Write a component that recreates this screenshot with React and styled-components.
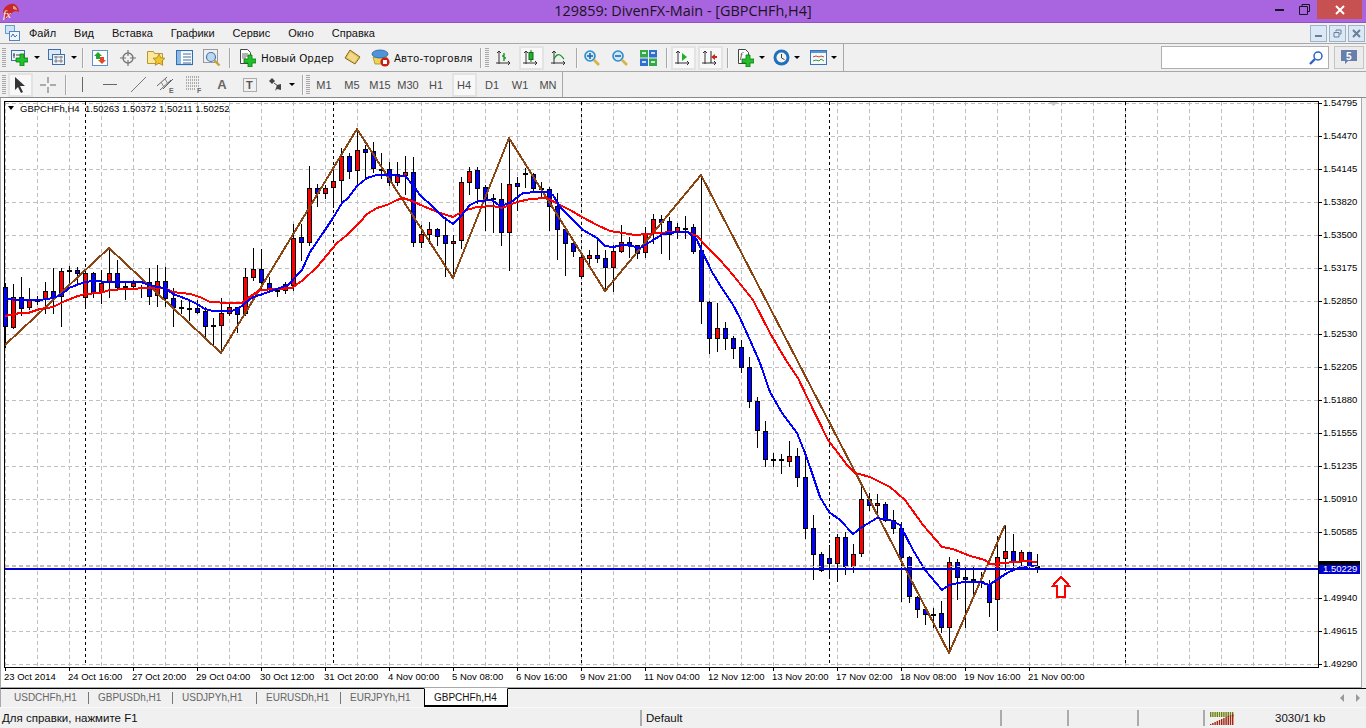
import React from "react"
import styled, { createGlobalStyle } from "styled-components"

const GlobalStyle = createGlobalStyle`
  html, body { margin: 0; padding: 0; background: #f0f0f0; overflow: hidden; }
  body { font-family: "Liberation Sans", Arial, sans-serif; }
  * { box-sizing: border-box; }
`

const Window = styled.div`
  width: 1366px;
  height: 728px;
  display: flex;
  flex-direction: column;
  background: #f0f0f0;
  color: #111;
  overflow: hidden;
`

const TitleBar = styled.div`
  position: relative;
  flex: 0 0 23px;
  height: 23px;
  background: #a865df;
  border-bottom: 1px solid #8f53c2;
  display: flex;
  align-items: center;
  padding-left: 2px;
`

const TitleText = styled.div`
  position: absolute;
  left: 0;
  right: 0;
  top: 1px;
  text-align: center;
  font: 14.4px "Open Sans", sans-serif;
  color: #1b1224;
  line-height: 20px;
`

const WinControls = styled.div`
  margin-left: auto;
  display: flex;
  align-items: flex-start;
  height: 22px;
  margin-right: 4px;
`

const WinBtn = styled.div`
  width: ${p => p.$w}px;
  height: 19px;
  display: flex;
  align-items: center;
  justify-content: center;
  background: ${p => p.$close ? "#c75050" : "transparent"};
`

const MenuBar = styled.div`
  flex: 0 0 21px;
  display: flex;
  align-items: center;
  padding-left: 5px;
  border-bottom: 1px solid #a8a8a8;
  height: 21px;
`

const MenuItem = styled.div`
  font-size: 11px;
  padding: 0 9px;
  line-height: 18px;
`

const MenuIcon = styled.div`
  width: 15px;
  height: 16px;
`

const MdiGroup = styled.div`
  margin-left: auto;
  display: flex;
  gap: 2px;
  padding-right: 1px;
`

const MdiBtn = styled.div`
  width: 17px;
  height: 17px;
  background: #dbe8f6;
  border: 1px solid #9db2c6;
  display: flex;
  align-items: center;
  justify-content: center;
`

const ToolRow = styled.div`
  flex: 0 0 ${p => p.$h}px;
  height: ${p => p.$h}px;
  display: flex;
  align-items: center;
  padding-left: 2px;
  border-bottom: 1px solid ${p => p.$dark ? "#8a8a8a" : "#a8a8a8"};
`

const RowEnd = styled.div`
  width: 1px;
  align-self: stretch;
  background: #a8a8a8;
  margin-left: ${p => p.$l || 0}px;
`

const Grip = styled.div`
  width: 4px;
  height: 20px;
  margin-left: ${p => p.$l || 0}px;
  background: repeating-linear-gradient(to bottom, #a8a8a8 0 1px, #f0f0f0 1px 2px);
`

const Sep = styled.div`
  width: 2px;
  height: 20px;
  background: linear-gradient(to right, #a8a8a8 50%, #f8f8f8 50%);
  margin-left: ${p => p.$l}px;
  margin-right: ${p => p.$r}px;
`

const ToolBtn = styled.div`
  width: ${p => p.$w}px;
  height: 24px;
  display: flex;
  align-items: center;
  justify-content: ${p => p.$left ? "flex-start" : "center"};
  padding-left: ${p => p.$pad || 0}px;
  gap: ${p => p.$gap || 0}px;
  flex: none;
  position: relative;
  font-size: 11px;
  color: ${p => p.$muted ? "#4a4a4a" : "#111"};
`

const ActiveFace = styled.div`
  width: 25px;
  height: 24px;
  border: 2px solid #e3e3e3;
  background: #f8f8f8;
  display: flex;
  align-items: center;
  justify-content: center;
  font-size: 11px;
  color: #4a4a4a;
`

const ToolLabel = styled.span`
  font: 10.3px "DejaVu Sans", sans-serif;
  white-space: nowrap;
`

const Caret = styled.i`
  display: block;
  flex: none;
  width: 0;
  height: 0;
  border-left: 3px solid transparent;
  border-right: 3px solid transparent;
  border-top: 3px solid #000;
`

const SearchBox = styled.div`
  margin-left: auto;
  width: 168px;
  height: 23px;
  background: #fff;
  border: 1px solid #b0b0b0;
  display: flex;
  align-items: center;
  justify-content: flex-end;
  padding-right: 5px;
`

const MailBtn = styled.div`
  width: 30px;
  height: 23px;
  margin: 0 2px 0 5px;
  background: #ececec;
  border: 1px solid #c4c4c4;
  display: flex;
  align-items: center;
  justify-content: center;
`

const ChartPane = styled.div`
  flex: 0 0 590px;
  height: 590px;
  display: flex;
  padding-right: 4px;
`

const ChartSurface = styled.div`
  flex: 1;
  background: #fff;
  border-left: 1px solid #a8a8a8;
  border-right: 1px solid #a8a8a8;
  border-bottom: 1px solid #a8a8a8;
  overflow: hidden;
`

const ChartSvg = styled.svg`
  display: block;
  font-family: "Liberation Sans", Arial, sans-serif;
  font-size: 9.5px;
  fill: #000;
`

const TabBar = styled.div`
  flex: 0 0 19px;
  height: 19px;
  display: flex;
  align-items: stretch;
  border-top: 1px solid #000;
  padding-left: 4px;
  border-left: 1px solid #a8a8a8;
`

const Tab = styled.div`
  width: 84px;
  margin-left: ${p => p.$active ? -1 : 0}px;
  font-size: 10px;
  line-height: 17px;
  padding-left: 9px;
  color: ${p => p.$active ? "#111" : "#666"};
  background: ${p => p.$active ? "#fff" : "transparent"};
  margin-top: ${p => p.$active ? -1 : 0}px;
  border-top: ${p => p.$active ? "1px solid #fff" : "none"};
  border-left: ${p => p.$active ? "1px solid #000" : "none"};
  border-right: ${p => p.$active ? "1px solid #000" : "none"};
  border-bottom: ${p => p.$active ? "2px solid #000" : "none"};
  position: relative;
  ${p => p.$sep ? `
    &::after {
      content: "";
      position: absolute;
      right: 0;
      top: 3px;
      bottom: 3px;
      width: 1px;
      background: #777;
    }
  ` : ""}
`

const TabArrows = styled.div`
  margin-left: auto;
  display: flex;
  align-items: center;
  gap: 12px;
  padding-right: 6px;
`

const TabArrow = styled.i`
  display: block;
  width: 0;
  height: 0;
  border-top: 4px solid transparent;
  border-bottom: 4px solid transparent;
  ${p => p.$right ? "border-left: 4px solid #999;" : "border-right: 4px solid #999;"}
`

const StatusBar = styled.div`
  flex: 1;
  display: flex;
  align-items: center;
  font-size: 11.5px;
  border-top: 1px solid #f8f8f8;
`

const StatusCell = styled.div`
  width: ${p => p.$w}px;
  flex: ${p => p.$w ? "none" : 1};
  height: 16px;
  line-height: 16px;
  padding-left: ${p => p.$pad || 0}px;
  border-right: ${p => p.$last ? "none" : "2px solid #ababab"};
  display: flex;
  align-items: center;
`

const Traffic = styled.div`
  margin-left: 5px;
  margin-right: 41px;
  flex: none;
  line-height: 0;
`

// icons, all hand drawn on a pixel grid
const Ico = ({ w = 16, h = 16, children }) => (
  <svg width={ w } height={ h } viewBox={ `0 0 ${ w } ${ h }` } style={{ display: "block", flex: "none" }}>
    { children }
  </svg>
)

const Plus = ({ x = 0, y = 0 }) => (
  <path d={ `M${ x + 4 } ${ y }h4v4h4v4h-4v4h-4v-4h-4v-4h4z` } fill="#22c02a" stroke="#0a7a10" strokeWidth="0.8" />
)

const Axes = () => <path d="M3 1v13M0 13h14M1 3l2-2 2 2M12 11l2 2-2 2" stroke="#333" fill="none" strokeWidth="1" />

const AppLogo = () => (
  <Ico w={ 18 } h={ 17 }>
    <path d="M1 9C2 3 8 0 12 1c3 1 5 4 5 8l-3-1-3 1-3 3-4 4-2-2z" fill="#c8282a" />
    <path d="M11 3c2 0 4 2 4 4l-4-1z" fill="#e8a090" />
    <text x="1" y="15" fontSize="11" fontStyle="italic" fontFamily="Liberation Serif" fill="#fff">fx</text>
  </Ico>
)

const MdiIcon = () => (
  <Ico w={ 15 } h={ 16 }>
    <rect x="0.5" y="0.5" width="9" height="8" fill="#cfe3f7" stroke="#6c9bd0" />
    <rect x="4.5" y="6.5" width="10" height="9" fill="#f0f6fc" stroke="#4d84c4" />
    <path d="M6 12l2-3 2 3 2-2" stroke="#3a70b0" fill="none" />
  </Ico>
)

const NewChart = () => (
  <Ico w={ 17 } h={ 17 }>
    <rect x="0.5" y="1.5" width="13" height="10" fill="#eef4fb" stroke="#3d6fae" />
    <path d="M3 4v5M5 6h5M2 6h2" stroke="#444" />
    <Plus x={ 5 } y={ 5 } />
  </Ico>
)

const Profiles = () => (
  <Ico w={ 17 } h={ 17 }>
    <rect x="0.5" y="0.5" width="12" height="10" fill="#dbe8f6" stroke="#3d6fae" />
    <rect x="4.5" y="5.5" width="12" height="10" fill="#eef4fb" stroke="#3d6fae" />
    <path d="M6 8h9M6 12h9M8 7v7M13 7v7" stroke="#555" strokeWidth="0.7" />
  </Ico>
)

const MarketWatch = () => (
  <Ico>
    <rect x="0.5" y="0.5" width="15" height="15" fill="#fff" stroke="#5a93cf" />
    <path d="M6 2l-4 4h2v3h4V6h2z" fill="#1fa82b" />
    <path d="M10 14l4-4h-2V7H8v3H6z" fill="#e04a2a" />
  </Ico>
)

const Navigator = () => (
  <Ico w={ 16 } h={ 16 }>
    <circle cx="8" cy="8" r="5" fill="none" stroke="#777" strokeWidth="1.4" />
    <path d="M8 0v6M8 10v6M0 8h6M10 8h6" stroke="#777" strokeWidth="1.2" />
  </Ico>
)

const FolderStar = () => (
  <Ico w={ 19 } h={ 17 }>
    <path d="M0.5 2.5h6l1 2h8v10h-15z" fill="#fbe89c" stroke="#b9962f" />
    <path d="M12 5l1.8 3.8 4.2.5-3 2.8.8 4.2-3.8-2.1-3.8 2.1.8-4.2-3-2.8 4.2-.5z" fill="#f2c32c" stroke="#a88415" strokeWidth="0.8" />
  </Ico>
)

const TerminalIcon = () => (
  <Ico w={ 17 } h={ 16 }>
    <rect x="0.5" y="0.5" width="16" height="14" fill="#fff" stroke="#2f6fb6" strokeWidth="1.2" />
    <rect x="1" y="1" width="4" height="13" fill="#8fb8e2" />
    <path d="M7 4h8M7 7h8M7 10h8M7 13h8" stroke="#3f6f9f" />
  </Ico>
)

const Tester = () => (
  <Ico w={ 18 } h={ 18 }>
    <rect x="0.5" y="0.5" width="14" height="13" fill="#eceff3" stroke="#9a9a9a" />
    <circle cx="8" cy="8" r="4.5" fill="#bcd8ef" stroke="#4d79a8" strokeWidth="1.2" />
    <path d="M11.5 11.5l5 5" stroke="#c8a030" strokeWidth="2.4" />
  </Ico>
)

const NewOrder = () => (
  <Ico w={ 17 } h={ 18 }>
    <path d="M1.5 0.5h7l3 3v11h-10z" fill="#fff" stroke="#444" />
    <path d="M3 5h6M3 7h6M3 9h4" stroke="#666" />
    <Plus x={ 5 } y={ 6 } />
  </Ico>
)

const Book = () => (
  <Ico w={ 17 } h={ 17 }>
    <path d="M6 1l10 7-5 7L1 9z" fill="#e3bd55" stroke="#8a6a18" />
    <path d="M6 3l8 5.5-3.5 5L3 8.5z" fill="#f1d98c" />
  </Ico>
)

const AutoTrade = () => (
  <Ico w={ 19 } h={ 18 }>
    <path d="M2 8h14l-1 7H4z" fill="#efd25a" stroke="#a98a1c" strokeWidth="0.8" />
    <ellipse cx="9" cy="5" rx="8" ry="4" fill="#4f94d8" stroke="#2a5f9e" strokeWidth="0.8" />
    <circle cx="14" cy="13" r="4.6" fill="#c81f12" />
    <rect x="12" y="11" width="4" height="4" fill="#fff" />
  </Ico>
)

const BarsIcon = () => (
  <Ico>
    <Axes />
    <path d="M8 3v8M8 8h2M6 6h2" stroke="#14961f" strokeWidth="1.4" fill="none" />
  </Ico>
)

const CandleIcon = () => (
  <Ico>
    <Axes />
    <path d="M8 0v12" stroke="#14691c" />
    <rect x="6" y="2.5" width="4" height="7" fill="#1fb52b" stroke="#14691c" />
  </Ico>
)

const LineIcon = () => (
  <Ico>
    <Axes />
    <path d="M3 9c2-4 4-5 6-4s3 3 4 4" stroke="#14961f" fill="none" strokeWidth="1.2" />
  </Ico>
)

const ZoomGlass = ({ plus }) => (
  <Ico>
    <circle cx="6" cy="6" r="5" fill="#cfe6f8" stroke="#2c8ac9" strokeWidth="1.6" />
    <path d="M3 6h6" stroke="#1d6ea8" strokeWidth="1.6" />
    { plus ? <path d="M6 3v6" stroke="#1d6ea8" strokeWidth="1.6" /> : null }
    <path d="M10 10l5 5" stroke="#d9b441" strokeWidth="2.6" />
  </Ico>
)

const Tile = () => (
  <Ico w={ 17 } h={ 16 }>
    <rect x="0" y="0" width="8" height="7.5" fill="#35a84a" />
    <rect x="9" y="0" width="8" height="7.5" fill="#2f6fd0" />
    <rect x="0" y="8.5" width="8" height="7.5" fill="#2f6fd0" />
    <rect x="9" y="8.5" width="8" height="7.5" fill="#35a84a" />
    <path d="M2 3h4M11 3h4M2 12h4M11 12h4" stroke="#fff" strokeWidth="1.6" />
  </Ico>
)

const ScrollIcon = () => (
  <Ico>
    <Axes />
    <path d="M7 3l5 4-5 4z" fill="#22b02c" />
  </Ico>
)

const ShiftIcon = () => (
  <Ico>
    <Axes />
    <path d="M9 1v12" stroke="#222" />
    <path d="M9 7l4-3v2h2v2h-2v2z" fill="#c8281a" />
  </Ico>
)

const Indicators = () => (
  <Ico w={ 17 } h={ 18 }>
    <path d="M1.5 0.5h7l3 3v11h-10z" fill="#fff" stroke="#444" />
    <text x="3" y="9" fontSize="9" fontStyle="italic" fontFamily="Liberation Serif" fill="#222">f</text>
    <Plus x={ 5 } y={ 6 } />
  </Ico>
)

const ClockIcon = () => (
  <Ico w={ 17 } h={ 17 }>
    <circle cx="8.5" cy="8.5" r="8" fill="#1f6fc0" />
    <circle cx="8.5" cy="8.5" r="5" fill="#f2f2ee" />
    <path d="M8.5 5v4l3 1.5" stroke="#444" fill="none" />
  </Ico>
)

const TemplateIcon = () => (
  <Ico w={ 17 } h={ 15 }>
    <rect x="0.5" y="0.5" width="16" height="14" fill="#f4f8fc" stroke="#3a74b8" />
    <rect x="1" y="1" width="15" height="2" fill="#5a93d5" />
    <path d="M3 7l3-1 3 1 2-1 3 1" stroke="#c84a2a" fill="none" />
    <path d="M3 11l3-1 3 1 2-2 3 2" stroke="#2ea03a" fill="none" />
  </Ico>
)

const CursorIcon = () => (
  <Ico w={ 12 } h={ 16 }>
    <path d="M1 0l10 9H6l3 6-2 1-3-6-3 3z" fill="#333" />
  </Ico>
)

const CrossIcon = () => (
  <Ico>
    <path d="M8 0v6M8 10v6M0 8h6M10 8h6" stroke="#666" />
  </Ico>
)

const VLineIcon = () => <Ico w={ 3 } h={ 15 }><path d="M1.5 0v15" stroke="#666" /></Ico>
const HLineIcon = () => <Ico w={ 14 } h={ 3 }><path d="M0 1.5h14" stroke="#666" /></Ico>
const TrendIcon = () => <Ico w={ 15 } h={ 15 }><path d="M0 15L15 0" stroke="#777" /></Ico>

const ChannelIcon = () => (
  <Ico w={ 18 } h={ 18 }>
    <path d="M0 10L10 1M3 14L14 4M6 13L16 3" stroke="#666" />
    <path d="M4 6l3 5M8 3l3 5" stroke="#888" />
    <text x="12" y="17" fontSize="7" fontWeight="bold" fill="#666" fontFamily="Liberation Sans">E</text>
  </Ico>
)

const FiboIcon = () => (
  <Ico w={ 16 } h={ 17 }>
    <path d="M0 1h14M0 4h14M0 7h14M0 10h14M0 13h10" stroke="#666" strokeDasharray="1 1" />
    <text x="11" y="17" fontSize="7" fontWeight="bold" fill="#666" fontFamily="Liberation Sans">F</text>
  </Ico>
)

const LetterA = styled.span`
  font: bold 13px "Liberation Sans", sans-serif;
  color: #666;
`

const TextBoxIcon = () => (
  <Ico w={ 14 } h={ 14 }>
    <rect x="0.5" y="0.5" width="13" height="13" fill="none" stroke="#666" strokeDasharray="1 1" />
    <text x="3" y="11" fontSize="11" fontWeight="bold" fill="#555" fontFamily="Liberation Sans">T</text>
  </Ico>
)

const ShapesIcon = () => (
  <Ico w={ 14 } h={ 14 }>
    <path d="M3 0l3 3-3 3-3-3z" fill="#444" />
    <path d="M8 7l4-1v6l-4-1-2 2z" fill="#444" />
    <path d="M5 5l4 3" stroke="#444" />
  </Ico>
)

const SearchGlass = () => (
  <Ico w={ 14 } h={ 14 }>
    <circle cx="9" cy="5" r="4" fill="#fff" stroke="#2f62c0" strokeWidth="1.5" />
    <path d="M6 8l-5 5" stroke="#2f62c0" strokeWidth="2.4" />
  </Ico>
)

const MailIcon = () => (
  <Ico w={ 16 } h={ 15 }>
    <path d="M0 0h16v11H7l-3 3v-3H0z" fill="#667fab" />
    <text x="5" y="9.5" fontSize="10" fontWeight="bold" fill="#fff" fontFamily="Liberation Sans">5</text>
  </Ico>
)

const MdiGlyph = ({ kind }) => (
  <Ico w={ 9 } h={ 9 }>
    { kind === "min" ? <rect x="1" y="6" width="7" height="2" fill="#6a7f96" /> : null }
    { kind === "restore" ? <path d="M3 2.5V1h5v4H6.5M1 3.5h5v4.5H1z" stroke="#6a7f96" fill="none" /> : null }
    { kind === "close" ? <path d="M1 1l7 7M8 1l-7 7" stroke="#6a7f96" strokeWidth="2" /> : null }
  </Ico>
)

const TrafficIcon = () => {
  const bars = [5, 5, 5, 4, 5, 4, 5, 5, 4, 5, 4]
  return (
    <Ico w={ 24 } h={ 13 }>
      { bars.map((b, i) => (
        <g key={ i }>
          <rect x={ i * 2.2 } y={ 0 } width="1.4" height="5" fill="#6d7f0a" />
          <rect x={ i * 2.2 } y={ 12 - i } width="1.4" height={ i + 1 } fill="#a32410" />
        </g>
      )) }
    </Ico>
  )
}

// chart data, read off the picture in pixels: [kind, high, bodyTop, bodyBottom, low], first candle at x=5, step 8
const candles = [
  ["b",283,287,326,347],["r",284,297,327,328],["b",277,297,308,315],["r",288,300,307,309],["d",296,300,300,304],
  ["r",282,291,299,313],["b",268,291,297,313],["r",268,271,296,326],["d",266,270,271,282],["b",267,270,273,283],
  ["r",270,273,297,307],["b",272,273,292,297],["r",270,283,292,303],["r",248,273,282,297],["b",260,273,287,290],
  ["d",282,286,286,299],["r",280,283,286,287],["d",285,287,287,297],["b",268,282,296,304],["r",265,281,295,306],
  ["b",267,281,298,306],["b",288,298,307,326],["d",300,307,307,313],["d",300,308,308,320],["b",300,308,312,313],
  ["b",307,311,326,337],["d",318,325,325,345],["r",298,313,325,353],["r",303,307,313,315],["b",307,307,314,332],
  ["r",268,277,313,315],["r",248,269,277,280],["b",249,269,282,290],["b",277,283,289,292],["d",288,290,290,296],
  ["r",282,284,290,293],["r",224,238,285,290],["b",224,237,242,260],["r",166,188,242,245],["b",184,188,193,206],
  ["r",185,188,193,198],["r",168,181,187,207],["r",148,156,180,202],["b",153,156,171,178],["r",129,150,170,183],
  ["b",145,149,152,177],["b",142,151,168,172],["d",153,169,169,178],["b",162,169,182,185],["r",162,174,182,185],
  ["r",156,172,175,194],["b",157,172,242,246],["r",225,234,242,247],["r",222,229,234,243],["b",228,229,236,245],
  ["b",217,235,243,276],["r",235,241,243,278],["r",177,182,240,248],["r",167,171,182,194],["b",167,170,188,203],
  ["b",185,187,198,230],["d",194,198,198,232],["b",183,199,232,245],["r",138,184,232,270],["b",177,183,186,210],
  ["d",168,173,173,187],["b",173,174,188,190],["d",182,188,189,198],["b",187,189,206,230],["b",193,206,229,259],
  ["b",228,229,243,275],["b",240,243,251,256],["r",255,257,276,276],["r",250,255,258,263],["b",240,255,258,262],
  ["b",250,258,267,291],["r",245,251,267,291],["r",225,242,251,252],["b",237,242,245,257],["b",245,245,253,258],
  ["r",227,233,252,257],["r",214,219,233,243],["b",215,219,222,253],["b",217,221,234,259],["r",223,227,231,238],
  ["d",216,228,228,238],["b",224,227,251,253],["b",175,250,301,323],["b",301,302,338,353],["r",303,328,338,351],
  ["b",322,328,338,349],["b",336,338,348,358],["b",340,347,367,372],["b",357,367,401,407],["b",397,401,430,447],
  ["b",421,431,459,466],["d",453,459,459,466],["d",454,459,459,473],["r",441,456,461,466],["b",448,456,477,486],
  ["b",451,477,528,538],["b",515,528,554,579],["b",552,554,570,571],["b",545,558,563,578],["r",534,537,563,581],
  ["b",532,537,566,574],["r",544,554,566,572],["r",487,499,553,556],["b",493,499,505,510],["r",494,503,505,515],
  ["b",502,504,520,521],["b",510,520,528,533],["b",522,528,557,601],["b",556,557,596,602],["b",596,597,609,617],
  ["b",609,609,614,624],["d",608,614,614,627],["b",601,613,627,632],["r",557,562,627,652],["b",559,562,577,599],
  ["b",566,577,579,627],["d",566,579,579,597],["d",572,581,581,587],["b",580,585,602,616],["r",536,557,599,630],
  ["r",525,551,558,570],["b",534,551,561,568],["r",550,552,561,567],["b",552,552,566,568],["d",554,566,566,572],
]

const zigzag = "5,345 109,248 221,353 357,129 453,278 509,138 605,291 701,175 949,653 1005,525"

const fastMa = "5,299 21,300 40,300 53,298 61,295 69,288 77,285 85,282 93,281 109,282 125,282 141,282 149,285 157,287 165,288 173,294 181,297 189,300 197,304 205,309 213,311 229,311 237,310 245,303 253,297 260,295 288,285 302,270 310,252 323,233 333,218 342,203 348,198 357,186 367,178 377,175 388,175 405,176 413,185 420,195 433,207 443,217 453,224 460,217 470,205 478,201 492,200 500,206 510,203 523,193 537,192 547,192 553,195 560,207 573,220 583,230 597,238 605,246 613,247 623,245 632,246 640,248 650,242 663,234 677,232 688,232 697,240 703,253 712,272 723,290 732,303 740,318 750,340 760,363 770,392 782,413 797,433 805,453 811,470 820,497 829,512 840,520 853,534 862,527 877,518 890,520 900,525 913,550 925,570 942,590 949,585 963,582 980,582 989,585 1007,573 1020,567 1037,566"

const slowMa = "5,316 20,313 28,313 40,309 53,307 63,302 75,297 85,294 100,293 110,290 127,289 150,288 165,288 173,292 190,294 200,297 210,302 230,303 242,303 248,298 260,290 292,288 303,280 317,267 337,243 347,235 360,222 367,214 377,208 387,205 397,200 403,198 412,201 423,206 440,213 453,217 463,211 477,207 493,206 502,208 517,202 530,199 547,198 560,205 570,210 582,217 597,225 610,231 623,233 635,235 647,234 657,233 673,232 687,232 697,236 707,247 720,260 733,275 745,290 753,300 770,333 787,362 798,378 807,397 828,440 838,453 847,465 855,473 870,477 890,487 905,500 923,525 942,547 953,549 970,556 985,560 990,564 1003,563 1027,561 1037,562"

const prices = ["1.54795","1.54470","1.54145","1.53820","1.53500","1.53175","1.52850","1.52530","1.52205","1.51880","1.51555","1.51235","1.50910","1.50585",null,"1.49940","1.49615","1.49290"]

const times = ["23 Oct 2014","24 Oct 16:00","27 Oct 20:00","29 Oct 04:00","30 Oct 12:00","31 Oct 20:00","4 Nov 00:00","5 Nov 08:00","6 Nov 16:00","9 Nov 21:00","11 Nov 04:00","12 Nov 12:00","13 Nov 20:00","17 Nov 02:00","18 Nov 08:00","19 Nov 16:00","21 Nov 00:00"]

const range = (n) => Array.from({ length: n }, (_, i) => i)

const Candle = ({ data, x }) => {
  const [kind, high, top, bottom, low] = data
  const mid = x + 0.5
  return (
    <g shapeRendering="crispEdges">
      <path d={ `M${ mid } ${ high }V${ low + 1 }` } stroke="#000" />
      { kind === "d"
        ? <rect x={ x - 2 } y={ top } width="5" height="1.5" fill="#000" />
        : <rect x={ x - 1.5 } y={ top + 0.5 } width="4" height={ bottom - top }
            fill={ kind === "r" ? "#ff0000" : "#0000ff" } stroke="#000" />
      }
    </g>
  )
}

const Chart = () => (
  <ChartSvg width="1360" height="589" viewBox="1 98 1360 589">
    <g shapeRendering="crispEdges" fill="none">
      { range(18).map(i => (
        <path key={ i } d={ `M5 ${ 103.5 + 33 * i }H1318` } stroke="#c0c0c0" strokeDasharray="4 3" />
      )) }
      { range(41).map(i => (
        <path key={ i } d={ `M${ 5.5 + 32 * i } 102V666` } stroke="#c0c0c0" strokeDasharray="4 3" />
      )) }
      { [85, 333, 581, 829, 1125].map(x => (
        <path key={ x } d={ `M${ x + 0.5 } 102V666` } stroke="#000" strokeDasharray="3 3" />
      )) }
      <rect x="4.5" y="101.5" width="1314" height="565.5" stroke="#000" />
      { range(18).map(i => (
        <path key={ i } d={ `M1318 ${ 103.5 + 33 * i }h4` } stroke="#000" />
      )) }
      { range(17).map(i => (
        <path key={ i } d={ `M${ 5.5 + 64 * i } 667v4` } stroke="#000" />
      )) }
    </g>

    { candles.map((c, i) => <Candle key={ i } data={ c } x={ 5 + 8 * i } />) }

    <g fill="none" strokeWidth="2" shapeRendering="crispEdges" strokeLinejoin="round">
      <polyline points={ zigzag } stroke="#8b4513" />
      <polyline points={ slowMa } stroke="#ff0000" />
      <polyline points={ fastMa } stroke="#0000ff" />
    </g>

    <path d="M5 566H1318" stroke="#c0c0c0" strokeDasharray="4 3" shapeRendering="crispEdges" />
    <rect x="5" y="568" width="1313" height="2" fill="#0000d0" shapeRendering="crispEdges" />

    <polygon points="1061,577 1069.5,586 1065,586 1065,597 1057,597 1057,586 1052.5,586" fill="#fff" stroke="#ff0000" strokeWidth="2" shapeRendering="crispEdges" />
    <polygon points="1049,102 1058,102 1053.5,106" fill="#c8c8c8" />

    <polygon points="8,106 14,106 11,110" fill="#000" />
    <text x="20" y="112">GBPCHFh,H4</text>
    <text x="85" y="112">1.50263 1.50372 1.50211 1.50252</text>

    { prices.map((p, i) => p ? <text key={ p } x="1323" y={ 106 + 33 * i }>{ p }</text> : null) }
    { times.map((t, i) => <text key={ t } x={ 4 + 64 * i } y="680">{ t }</text>) }

    <rect x="1319" y="561" width="41" height="5" fill="#000" shapeRendering="crispEdges" />
    <rect x="1319" y="565" width="41" height="9" fill="#0000d0" shapeRendering="crispEdges" />
    <text x="1323" y="572" fill="#fff" style={{ fill: "#fff" }}>1.50229</text>
  </ChartSvg>
)

const periods = ["M1", "M5", "M15", "M30", "H1", "H4", "D1", "W1", "MN"]
const tabs = ["USDCHFh,H1", "GBPUSDh,H1", "USDJPYh,H1", "EURUSDh,H1", "EURJPYh,H1", "GBPCHFh,H4"]

export default function App() {
  return (
    <Window>
      <GlobalStyle />

      <TitleBar>
        <AppLogo />
        <TitleText>129859: DivenFX-Main - [GBPCHFh,H4]</TitleText>
        <WinControls>
          <WinBtn $w={ 25 }>
            <svg width="9" height="3"><rect width="9" height="2" y="1" fill="#1b1224" /></svg>
          </WinBtn>
          <WinBtn $w={ 25 }>
            <svg width="11" height="11"><path d="M3 2.5V.5h7.5v7H8.5M.5 2.5h8v8h-8z" fill="none" stroke="#1b1224" /></svg>
          </WinBtn>
          <WinBtn $w={ 45 } $close>
            <svg width="10" height="10"><path d="M1 1l8 8M9 1l-8 8" stroke="#fff" strokeWidth="2" /></svg>
          </WinBtn>
        </WinControls>
      </TitleBar>

      <MenuBar>
        <MenuIcon><MdiIcon /></MenuIcon>
        { ["Файл", "Вид", "Вставка", "Графики", "Сервис", "Окно", "Справка"].map(m => (
          <MenuItem key={ m }>{ m }</MenuItem>
        )) }
        <MdiGroup>
          <MdiBtn><MdiGlyph kind="min" /></MdiBtn>
          <MdiBtn><MdiGlyph kind="restore" /></MdiBtn>
          <MdiBtn><MdiGlyph kind="close" /></MdiBtn>
        </MdiGroup>
      </MenuBar>

      <ToolRow $h={ 28 }>
        <Grip />
        <ToolBtn $w={ 34 } $left $pad={ 5 } $gap={ 6 }><NewChart /><Caret /></ToolBtn>
        <ToolBtn $w={ 38 } $left $pad={ 8 } $gap={ 6 }><Profiles /><Caret /></ToolBtn>
        <Sep $l={ 4 } $r={ 2 } />
        <ToolBtn $w={ 28 }><MarketWatch /></ToolBtn>
        <ToolBtn $w={ 28 }><Navigator /></ToolBtn>
        <ToolBtn $w={ 28 }><FolderStar /></ToolBtn>
        <ToolBtn $w={ 28 }><TerminalIcon /></ToolBtn>
        <ToolBtn $w={ 28 }><Tester /></ToolBtn>
        <Sep $l={ 3 } $r={ 2 } />
        <ToolBtn $w={ 105 } $left $pad={ 6 } $gap={ 5 }><NewOrder /><ToolLabel>Новый Ордер</ToolLabel></ToolBtn>
        <ToolBtn $w={ 28 }><Book /></ToolBtn>
        <ToolBtn $w={ 110 } $left $pad={ 5 } $gap={ 4 }><AutoTrade /><ToolLabel>Авто-торговля</ToolLabel></ToolBtn>
        <Sep $l={ 4 } $r={ 0 } />
        <Grip $l={ 3 } />
        <ToolBtn $w={ 29 }><BarsIcon /></ToolBtn>
        <ToolBtn $w={ 26 }><ActiveFace><CandleIcon /></ActiveFace></ToolBtn>
        <ToolBtn $w={ 30 }><LineIcon /></ToolBtn>
        <Sep $l={ 2 } $r={ 0 } />
        <ToolBtn $w={ 28 }><ZoomGlass plus /></ToolBtn>
        <ToolBtn $w={ 28 }><ZoomGlass /></ToolBtn>
        <ToolBtn $w={ 28 }><Tile /></ToolBtn>
        <Sep $l={ 4 } $r={ 2 } />
        <ToolBtn $w={ 26 }><ActiveFace><ScrollIcon /></ActiveFace></ToolBtn>
        <ToolBtn $w={ 28 }><ActiveFace><ShiftIcon /></ActiveFace></ToolBtn>
        <Sep $l={ 3 } $r={ 0 } />
        <ToolBtn $w={ 37 } $left $pad={ 8 } $gap={ 5 }><Indicators /><Caret /></ToolBtn>
        <ToolBtn $w={ 37 } $left $pad={ 7 } $gap={ 4 }><ClockIcon /><Caret /></ToolBtn>
        <ToolBtn $w={ 37 } $left $pad={ 7 } $gap={ 4 }><TemplateIcon /><Caret /></ToolBtn>
        <RowEnd $l={ 3 } />
        <SearchBox><SearchGlass /></SearchBox>
        <MailBtn><MailIcon /></MailBtn>
      </ToolRow>

      <ToolRow $h={ 26 } $dark>
        <Grip />
        <ToolBtn $w={ 28 }><ActiveFace><CursorIcon /></ActiveFace></ToolBtn>
        <ToolBtn $w={ 28 }><CrossIcon /></ToolBtn>
        <Sep $l={ 3 } $r={ 1 } />
        <ToolBtn $w={ 28 }><VLineIcon /></ToolBtn>
        <ToolBtn $w={ 28 }><HLineIcon /></ToolBtn>
        <ToolBtn $w={ 28 }><TrendIcon /></ToolBtn>
        <ToolBtn $w={ 28 }><ChannelIcon /></ToolBtn>
        <ToolBtn $w={ 28 }><FiboIcon /></ToolBtn>
        <ToolBtn $w={ 28 }><LetterA>A</LetterA></ToolBtn>
        <ToolBtn $w={ 28 }><TextBoxIcon /></ToolBtn>
        <ToolBtn $w={ 34 } $left $pad={ 5 } $gap={ 6 }><ShapesIcon /><Caret /></ToolBtn>
        <Sep $l={ 4 } $r={ 2 } />
        <Grip />
        { periods.map(p => (
          <ToolBtn key={ p } $w={ 28 } $muted>
            { p === "H4" ? <ActiveFace>{ p }</ActiveFace> : p }
          </ToolBtn>
        )) }
        <RowEnd />
      </ToolRow>

      <ChartPane>
        <ChartSurface>
          <Chart />
        </ChartSurface>
      </ChartPane>

      <TabBar>
        { tabs.map((t, i) => (
          <Tab key={ t } $active={ i === 5 } $sep={ i < 4 }>{ t }</Tab>
        )) }
        <TabArrows>
          <TabArrow />
          <TabArrow $right />
        </TabArrows>
      </TabBar>

      <StatusBar>
        <StatusCell $w={ 642 } $pad={ 2 }>Для справки, нажмите F1</StatusCell>
        <StatusCell $w={ 360 } $pad={ 4 }>Default</StatusCell>
        <StatusCell $w={ 67 } />
        <StatusCell $w={ 70 } />
        <StatusCell $w={ 66 } />
        <StatusCell $last>
          <Traffic><TrafficIcon /></Traffic>
          3030/1 kb
        </StatusCell>
      </StatusBar>
    </Window>
  )
}
